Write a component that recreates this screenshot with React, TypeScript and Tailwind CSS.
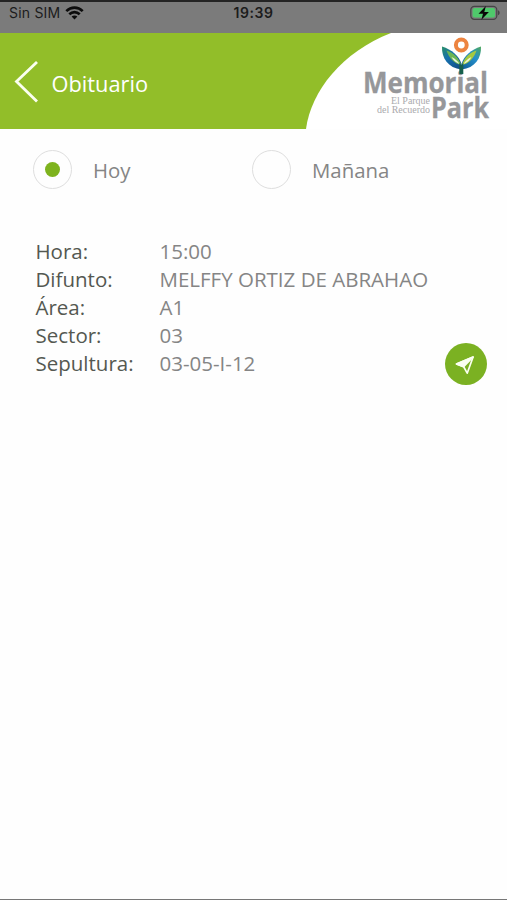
import { useState } from 'react';

const details = [
    { label: 'Hora:', value: '15:00' },
    { label: 'Difunto:', value: 'MELFFY ORTIZ DE ABRAHAO' },
    { label: 'Área:', value: 'A1' },
    { label: 'Sector:', value: '03' },
    { label: 'Sepultura:', value: '03-05-I-12' },
];

const StatusBar = () => {
    return (
        <div className="grid grid-cols-3 items-center h-[33px] border-t-2 border-[#242424] bg-[#7b7b7b] pb-[9px] text-[#1c1c1c] font-['Inter','Liberation_Sans',sans-serif]">
            <div className="flex items-center gap-[5px] pl-[9px]">
                <span className="text-[14px] leading-5 tracking-[0.2px]">Sin SIM</span>
                <svg width="19" height="14" viewBox="0 0 19 14" fill="none" stroke="#0c0c0c" strokeWidth="2.6">
                    <path d="M1.3 5.1C6 0.4 13 0.4 17.7 5.1" />
                    <path d="M4.3 8.3C7.3 5.4 11.7 5.4 14.7 8.3" />
                    <path d="M9.5 13.4L6.6 10.5C8.2 9.1 10.8 9.1 12.4 10.5Z" fill="#0c0c0c" stroke="none" />
                </svg>
            </div>
            <span className="text-center text-[14px] leading-5 font-semibold tracking-[0.6px]">19:39</span>
            <div className="flex justify-end pr-[6px]">
                <svg width="31" height="16" viewBox="0 0 31 16">
                    <rect x="0.8" y="1.3" width="26" height="13" rx="3.6" fill="none" stroke="#454545" strokeWidth="1.2" />
                    <rect x="2.6" y="3" width="22.4" height="9.6" rx="2" fill="#4fc96b" />
                    <path d="M28 5.3C30.2 6 30.2 9.6 28 10.3Z" fill="#454545" />
                    <path d="M15.9 1L8.5 8.7H13L11.4 14.8L18.9 7H14.3Z" fill="#080808" />
                </svg>
            </div>
        </div>
    );
};

const Logo = () => {
    return (
        <svg width="201" height="96" viewBox="306 33 201 96">
            <defs>
                <linearGradient id="leafLeft" x1="0" y1="0" x2="0.8" y2="1">
                    <stop offset="0" stopColor="#2a8f66" />
                    <stop offset="0.45" stopColor="#1670ae" />
                    <stop offset="1" stopColor="#114f86" />
                </linearGradient>
                <linearGradient id="leafRight" x1="1" y1="0" x2="0.2" y2="1">
                    <stop offset="0" stopColor="#4fa95a" />
                    <stop offset="0.45" stopColor="#2590cc" />
                    <stop offset="1" stopColor="#12639a" />
                </linearGradient>
            </defs>
            <path d="M306 129C311 91 342 52 391 33H507V129Z" fill="#fff" />
            <g className="font-['Open_Sans','Liberation_Sans',sans-serif]" fill="#96979a" stroke="#96979a" strokeWidth="0.3">
                <text x="363" y="92.5" fontSize="28" fontWeight="700" textLength="125" lengthAdjust="spacingAndGlyphs">Memorial</text>
                <text x="431" y="118" fontSize="28" fontWeight="700" textLength="58" lengthAdjust="spacingAndGlyphs">Park</text>
            </g>
            <g className="font-['Liberation_Serif',serif]" fill="#aaaaad">
                <text x="391" y="104" fontSize="9.5" textLength="39" lengthAdjust="spacingAndGlyphs">El Parque</text>
                <text x="377" y="112.5" fontSize="9.5" textLength="53" lengthAdjust="spacingAndGlyphs">del Recuerdo</text>
            </g>
            <circle cx="461.3" cy="45" r="5.4" fill="#fff" stroke="#ed8440" strokeWidth="4" />
            <path d="M461.5 64C459 56 452 49.5 442 46.5C441.5 58 448 68 461.5 69.5Z" fill="url(#leafLeft)" />
            <path d="M461.5 64C464 56 471 49.5 481 46.5C481.5 58 475 68 461.5 69.5Z" fill="url(#leafRight)" />
            <path d="M446.5 50.5C454 53 459 58 461 65C454 63.5 449 58 446.5 50.5Z" fill="#6db554" />
            <path d="M476.5 50.5C469 53 464 58 462 65C469 63.5 474 58 476.5 50.5Z" fill="#a5c940" />
            <path d="M451.5 57C455 58.5 457.5 61 459.5 64C456 62.8 453 60.3 451.5 57Z" fill="#e9f5de" />
            <path d="M471.5 57C468 58.5 465.5 61 463.5 64C467 62.8 470 60.3 471.5 57Z" fill="#e9f5de" />
            <path d="M459.3 63L461.3 65L463.3 63V74H459.3Z" fill="#17604c" />
        </svg>
    );
};

const Header = () => {
    return (
        <header className="flex items-center justify-between h-24 bg-[#92be29]">
            <button className="flex items-center gap-[12.5px] pl-[14px] pt-[2px] text-white">
                <svg width="25" height="42" viewBox="0 0 25 42" fill="none" stroke="#fbfff0" strokeWidth="2.8">
                    <path d="M23 1L2.5 20.5L23 40.5" />
                </svg>
                <span className="text-[21.8px] leading-7 pt-1">Obituario</span>
            </button>
            <Logo />
        </header>
    );
};

const DayOption = ({ label, selected, onSelect }: { label: string; selected: boolean; onSelect: () => void }) => {
    return (
        <button role="radio" aria-checked={selected} onClick={onSelect} className="flex items-center text-[#858585]">
            <span className="flex items-center justify-center w-[39px] h-[39px] rounded-full border border-[#dedede]">
                {selected && <span className="w-[15px] h-[15px] rounded-full bg-[#7eb31e]" />}
            </span>
            <span className="pl-[21px] text-[20.4px] leading-7">{label}</span>
        </button>
    );
};

export default function App() {
    const [day, setDay] = useState('hoy');

    return (
        <div className="flex flex-col w-[507px] h-[900px] overflow-hidden bg-[#fefefe] border-b border-[#777] font-['Open_Sans','Noto_Sans',sans-serif]">
            <StatusBar />
            <Header />
            <main className="flex-1">
                <div role="radiogroup" className="grid grid-cols-[219px_auto] justify-start pl-[33px] pt-[21px]">
                    <DayOption label="Hoy" selected={day === 'hoy'} onSelect={() => setDay('hoy')} />
                    <DayOption label="Mañana" selected={day === 'manana'} onSelect={() => setDay('manana')} />
                </div>
                <section className="flex items-end justify-between pt-[48px] pl-[35.5px] pr-5">
                    <dl className="text-[20.5px] leading-7">
                        {details.map(({ label, value }) => (
                            <div key={label} className="grid grid-cols-[124px_auto]">
                                <dt className="text-[#545851]">{label}</dt>
                                <dd className="text-[#858585] whitespace-nowrap">{value}</dd>
                            </div>
                        ))}
                    </dl>
                    <button aria-label="Ver ubicación" className="flex items-center justify-center w-[42px] h-[42px] -mb-[8px] rounded-full bg-[#7bb122]">
                        <svg width="22" height="22" viewBox="0 0 22 22" fill="none" stroke="#fafff0" strokeWidth="1.7" strokeLinejoin="round">
                            <path d="M18.1 4L1.5 11L8.6 13.6L12.2 20.2Z" />
                            <path d="M18.1 4L1.5 11L8.6 13.6Z" fill="#fafff0" />
                        </svg>
                    </button>
                </section>
            </main>
        </div>
    );
}
